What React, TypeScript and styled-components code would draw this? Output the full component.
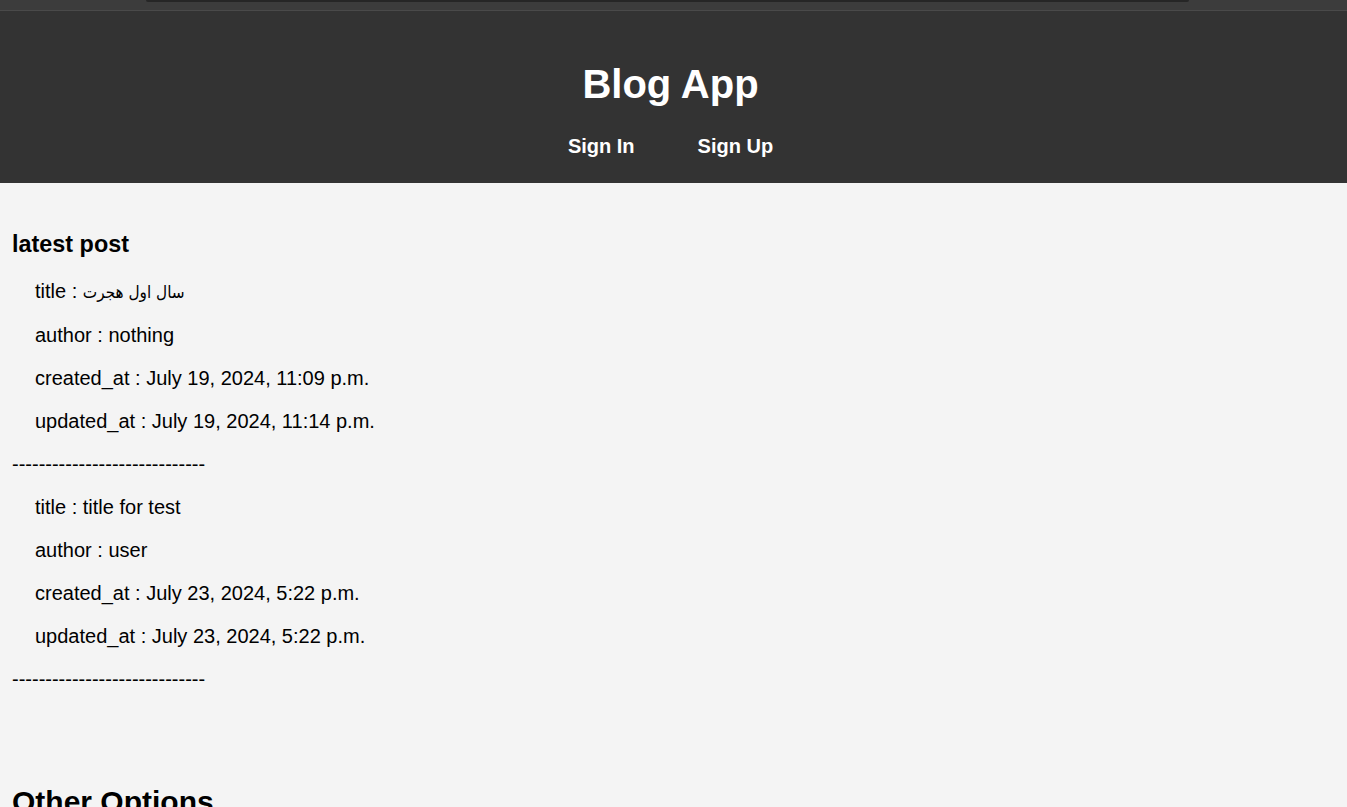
import React from "react";
import styled, { createGlobalStyle } from "styled-components";

const GlobalStyle = createGlobalStyle`
  html, body {
    margin: 0;
    padding: 0;
    background: #f4f4f4;
    font-family: "Liberation Sans", Arial, "Noto Sans", sans-serif;
    color: #000;
  }
`;

const ChromeStrip = styled.div`
  height: 10px;
  background: #3c3c3c;
  border-bottom: 1px solid #4a4a4a;
  display: flex;
  justify-content: center;
`;

const ChromePill = styled.div`
  width: 1043px;
  height: 2px;
  margin-right: 12px;
  background: #262626;
  border-radius: 0 0 6px 6px;
`;

const Header = styled.header`
  background: #333;
  color: #fff;
  text-align: center;
  padding: 50px 6px 25px 0;
`;

const Title = styled.h1`
  margin: 0 0 28px;
  font-size: 40px;
  font-weight: bold;
  line-height: 46px;
`;

const Nav = styled.nav`
  display: flex;
  justify-content: center;
  gap: 63px;
`;

const NavLink = styled.a`
  color: #fff;
  font-size: 20px;
  font-weight: bold;
  line-height: 23px;
  text-decoration: none;
  cursor: pointer;
`;

const Main = styled.main`
  padding: 48px 12px 0;
  font-size: 20px;
`;

const SectionTitle = styled.h3`
  margin: 0 0 22px;
  font-size: 23.4px;
  line-height: 27px;
  font-weight: bold;
`;

const PostList = styled.div`
  display: flex;
  flex-direction: column;
  gap: 20px;
`;

const Field = styled.p<{ $indent?: boolean }>`
  margin: 0;
  padding-left: ${(p) => (p.$indent ? "23px" : "0")};
  font-size: 20px;
  line-height: 23px;
`;

const Arabic = styled.bdi`
  font-family: "DejaVu Sans Condensed", "DejaVu Sans", sans-serif;
  font-size: 17px;
`;

const OtherTitle = styled.h2`
  margin: 94px 0 0;
  font-size: 30px;
  line-height: 34px;
  font-weight: bold;
`;

const posts = [
  {
    title: "سال اول هجرت",
    arabic: true,
    author: "nothing",
    created: "July 19, 2024, 11:09 p.m.",
    updated: "July 19, 2024, 11:14 p.m.",
  },
  {
    title: "title for test",
    arabic: false,
    author: "user",
    created: "July 23, 2024, 5:22 p.m.",
    updated: "July 23, 2024, 5:22 p.m.",
  },
];

const divider = "-".repeat(29);

export default function App() {
  return (
    <>
      <GlobalStyle />
      <ChromeStrip>
        <ChromePill />
      </ChromeStrip>
      <Header>
        <Title>Blog App</Title>
        <Nav>
          <NavLink>Sign In</NavLink>
          <NavLink>Sign Up</NavLink>
        </Nav>
      </Header>
      <Main>
        <SectionTitle>latest post</SectionTitle>
        <PostList>
          {posts.map((p, i) => (
            <React.Fragment key={i}>
              <Field $indent>
                title : {p.arabic ? <Arabic>{p.title}</Arabic> : p.title}
              </Field>
              <Field $indent>author : {p.author}</Field>
              <Field $indent>created_at : {p.created}</Field>
              <Field $indent>updated_at : {p.updated}</Field>
              <Field>{divider}</Field>
            </React.Fragment>
          ))}
        </PostList>
        <OtherTitle>Other Options</OtherTitle>
      </Main>
    </>
  );
}
